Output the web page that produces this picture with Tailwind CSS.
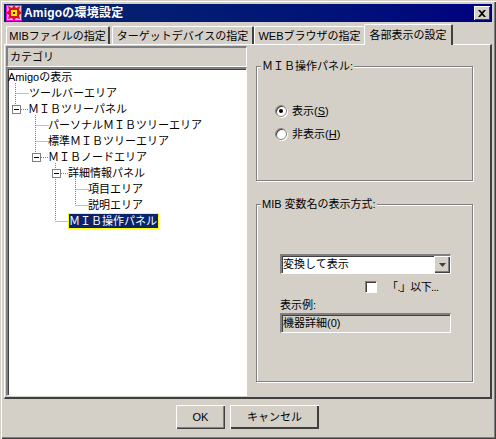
<!DOCTYPE html>
<html lang="ja">
<head>
<meta charset="utf-8">
<script src="https://cdn.jsdelivr.net/npm/@tailwindcss/browser@4"></script>
</head>
<body class="bg-[#d4d0c8]">
<div class="w-[496px] h-[439px] flex flex-col p-[4px] bg-[#d4d0c8] text-black text-[11px] leading-none font-['Liberation_Sans','Noto_Sans_CJK_JP',sans-serif] shadow-[inset_1px_1px_0_#d4d0c8,inset_2px_2px_0_#fff,inset_-1px_-1px_0_#404040,inset_-2px_-2px_0_#808080] overflow-hidden">
    <!-- title bar -->
    <div class="h-[18px] flex items-center bg-gradient-to-r from-[#0a246a] to-[#00007f] pl-[2px] pr-[2px] shrink-0">
        <svg width="16" height="16" viewBox="0 0 16 16" class="shrink-0">
            <rect width="16" height="16" fill="#ff00ff"/>
            <rect x="1" y="1" width="14" height="14" fill="#f4c0e0"/>
            <path d="M8 0l2 3 4-2-1 4 3 3-3 2 1 4-4-1-2 3-2-3-4 1 1-4-3-2 3-3-1-4 4 2z" fill="#d8102c"/>
            <rect x="5" y="5" width="6" height="6" fill="#f4e800"/>
            <rect x="7" y="7" width="2" height="2" fill="#900020"/>
        </svg>
        <span class="ml-[2px] text-white font-bold text-[12px] tracking-[0.2px]">Amigoの環境設定</span>
        <div class="ml-auto w-[16px] h-[14px] bg-[#d4d0c8] flex items-center justify-center shadow-[inset_1px_1px_0_#fff,inset_-1px_-1px_0_#404040]">
            <svg width="8" height="7" viewBox="0 0 8 7"><path d="M0 0h2l2 2 2-2h2L5 3.500 8 7H6L4 5 2 7H0l3-3.500z" fill="#000"/></svg>
        </div>
    </div>

    <!-- tabs -->
    <div class="h-[22px] flex items-end pl-[2px] shrink-0">
        <div class="w-[104px] h-[18px] pt-[1px] flex items-center justify-center whitespace-nowrap border-t border-l border-white border-r-2 border-r-[#404040] rounded-t-[2px]">MIBファイルの指定</div>
        <div class="w-[142px] h-[18px] pt-[1px] ml-[2px] flex items-center justify-center whitespace-nowrap border-t border-l border-white border-r-2 border-r-[#404040] rounded-t-[2px]">ターゲットデバイスの指定</div>
        <div class="w-[110px] h-[18px] pt-[1px] flex items-center justify-center whitespace-nowrap border-t border-l border-white rounded-t-[2px]">WEBブラウザの指定</div>
        <div class="relative z-10 w-[89px] h-[21px] -mb-[1px] flex items-center justify-center whitespace-nowrap bg-[#d4d0c8] border-t border-l border-white border-r-2 border-r-[#404040] rounded-t-[2px]">各部表示の設定</div>
    </div>

    <!-- tab panel -->
    <div class="h-[355px] w-[488px] shrink-0 flex pt-[1px] pl-[1px] border-t border-l border-white border-r-2 border-b-2 border-r-[#404040] border-b-[#404040]">
        <!-- left: category tree -->
        <div class="w-[241px] h-[350px] flex flex-col shrink-0">
            <div class="h-[21px] flex items-center pl-[2px] border-t-2 border-l-2 border-[#808080] border-r border-b border-r-white border-b-white">カテゴリ</div>
            <div class="relative h-[329px] bg-white border-t-2 border-l-2 border-[#808080] border-r border-b border-r-white border-b-white shadow-[inset_1px_1px_0_#404040]">
                <!-- tree connectors -->
                <svg class="absolute left-0 top-0" width="100" height="170" fill="none" stroke="#808080" stroke-dasharray="1 1">
                    <path d="M7.500 14v22M7.500 24.500h13M27.500 46v40M27.500 56.500h13M27.500 72.500h13M33 88.500h7M47.500 94v58M47.500 152.500h13M53 104.500h7M67.500 110v26M67.500 120.500h13M67.500 136.500h13M13 40.500h7"/>
                </svg>
                <div class="h-[16px] flex items-center">Amigoの表示</div>
                <div class="h-[16px] flex items-center pl-[21px]">ツールバーエリア</div>
                <div class="h-[16px] flex items-center pl-[20px]">ＭＩＢツリーパネル</div>
                <div class="h-[16px] flex items-center pl-[40px]">パーソナルＭＩＢツリーエリア</div>
                <div class="h-[16px] flex items-center pl-[40px]">標準ＭＩＢツリーエリア</div>
                <div class="h-[16px] flex items-center pl-[40px]">ＭＩＢノードエリア</div>
                <div class="h-[16px] flex items-center pl-[60px]">詳細情報パネル</div>
                <div class="h-[16px] flex items-center pl-[80px]">項目エリア</div>
                <div class="h-[16px] flex items-center pl-[80px]">説明エリア</div>
                <div class="h-[16px] flex items-center pl-[60px]">
                    <span class="relative h-[16px] w-[91px] flex items-center whitespace-nowrap bg-[#0a246a] text-white outline-1 outline-[#ffff00] -outline-offset-1 pl-[1px]">ＭＩＢ操作パネル</span>
                </div>
                <!-- expander boxes -->
                <span class="absolute left-[4px] top-[36px] w-[9px] h-[9px] bg-white border border-[#808080] flex items-center justify-center"><span class="w-[5px] h-[1px] bg-black"></span></span>
                <span class="absolute left-[24px] top-[84px] w-[9px] h-[9px] bg-white border border-[#808080] flex items-center justify-center"><span class="w-[5px] h-[1px] bg-black"></span></span>
                <span class="absolute left-[44px] top-[100px] w-[9px] h-[9px] bg-white border border-[#808080] flex items-center justify-center"><span class="w-[5px] h-[1px] bg-black"></span></span>
            </div>
        </div>

        <!-- right: settings -->
        <div class="flex-1 pl-[9px] pt-[20px] pr-[17px]">
            <div class="relative h-[115px] border border-[#808080] shadow-[inset_1px_1px_0_#fff,1px_1px_0_#fff] pt-[38px] pl-[18px]">
                <span class="absolute left-[4px] -top-[6px] bg-[#d4d0c8] px-[1px]">ＭＩＢ操作パネル:</span>
                <div class="flex items-center h-[12px] gap-[5px]">
                    <span class="w-[12px] h-[12px] rounded-full bg-white border border-[#808080] shadow-[inset_1px_1px_0_#404040,1px_1px_0_#fff] flex items-center justify-center"><span class="w-[4px] h-[4px] rounded-full bg-black"></span></span>
                    <span>表示(<span class="underline">S</span>)</span>
                </div>
                <div class="flex items-center h-[12px] gap-[5px] mt-[11px]">
                    <span class="w-[12px] h-[12px] rounded-full bg-white border border-[#808080] shadow-[inset_1px_1px_0_#404040,1px_1px_0_#fff]"></span>
                    <span>非表示(<span class="underline">H</span>)</span>
                </div>
            </div>
            <div class="relative h-[178px] mt-[23px] border border-[#808080] shadow-[inset_1px_1px_0_#fff,1px_1px_0_#fff] pt-[49px] pl-[23px]">
                <span class="absolute left-[4px] -top-[6px] bg-[#d4d0c8] px-[1px]">MIB 変数名の表示方式:</span>
                <div class="w-[171px] h-[20px] flex items-center bg-white border-t-2 border-l-2 border-t-[#808080] border-l-[#808080] border-r border-b border-r-white border-b-white shadow-[inset_1px_1px_0_#404040]">
                    <span class="pl-[1px]">変換して表示</span>
                    <span class="ml-auto w-[16px] h-[17px] bg-[#d4d0c8] flex items-center justify-center shadow-[inset_1px_1px_0_#fff,inset_-1px_-1px_0_#404040,inset_-2px_-2px_0_#808080]">
                        <svg width="7" height="4" viewBox="0 0 7 4"><path d="M0 0h7L3.500 4z" fill="#404040"/></svg>
                    </span>
                </div>
                <div class="flex items-center h-[12px] mt-[7px] ml-[85px] gap-[10px]">
                    <span class="w-[12px] h-[12px] bg-white border-t border-l border-t-[#808080] border-l-[#808080] border-r border-b border-r-white border-b-white shadow-[inset_1px_1px_0_#404040]"></span>
                    <span class="tracking-[-0.6px]">「.」以下...</span>
                </div>
                <div class="mt-[6px] h-[12px] flex items-center">表示例:</div>
                <div class="w-[171px] h-[20px] mt-[2px] flex items-center pl-[1px] border-t-2 border-l-2 border-t-[#808080] border-l-[#808080] border-r border-b border-r-white border-b-white shadow-[inset_1px_1px_0_#404040]">機器詳細(0)</div>
            </div>
        </div>
    </div>

    <!-- buttons -->
    <div class="flex mt-[6px] pl-[172px] gap-[5px]">
        <button class="w-[49px] h-[24px] bg-[#d4d0c8] flex items-center justify-center shadow-[inset_1px_1px_0_#fff,inset_-1px_-1px_0_#404040,inset_-2px_-2px_0_#808080]">OK</button>
        <button class="w-[89px] h-[24px] bg-[#d4d0c8] flex items-center justify-center shadow-[inset_1px_1px_0_#fff,inset_-2px_-2px_0_#404040]">キャンセル</button>
    </div>
</div>
</body>
</html>
